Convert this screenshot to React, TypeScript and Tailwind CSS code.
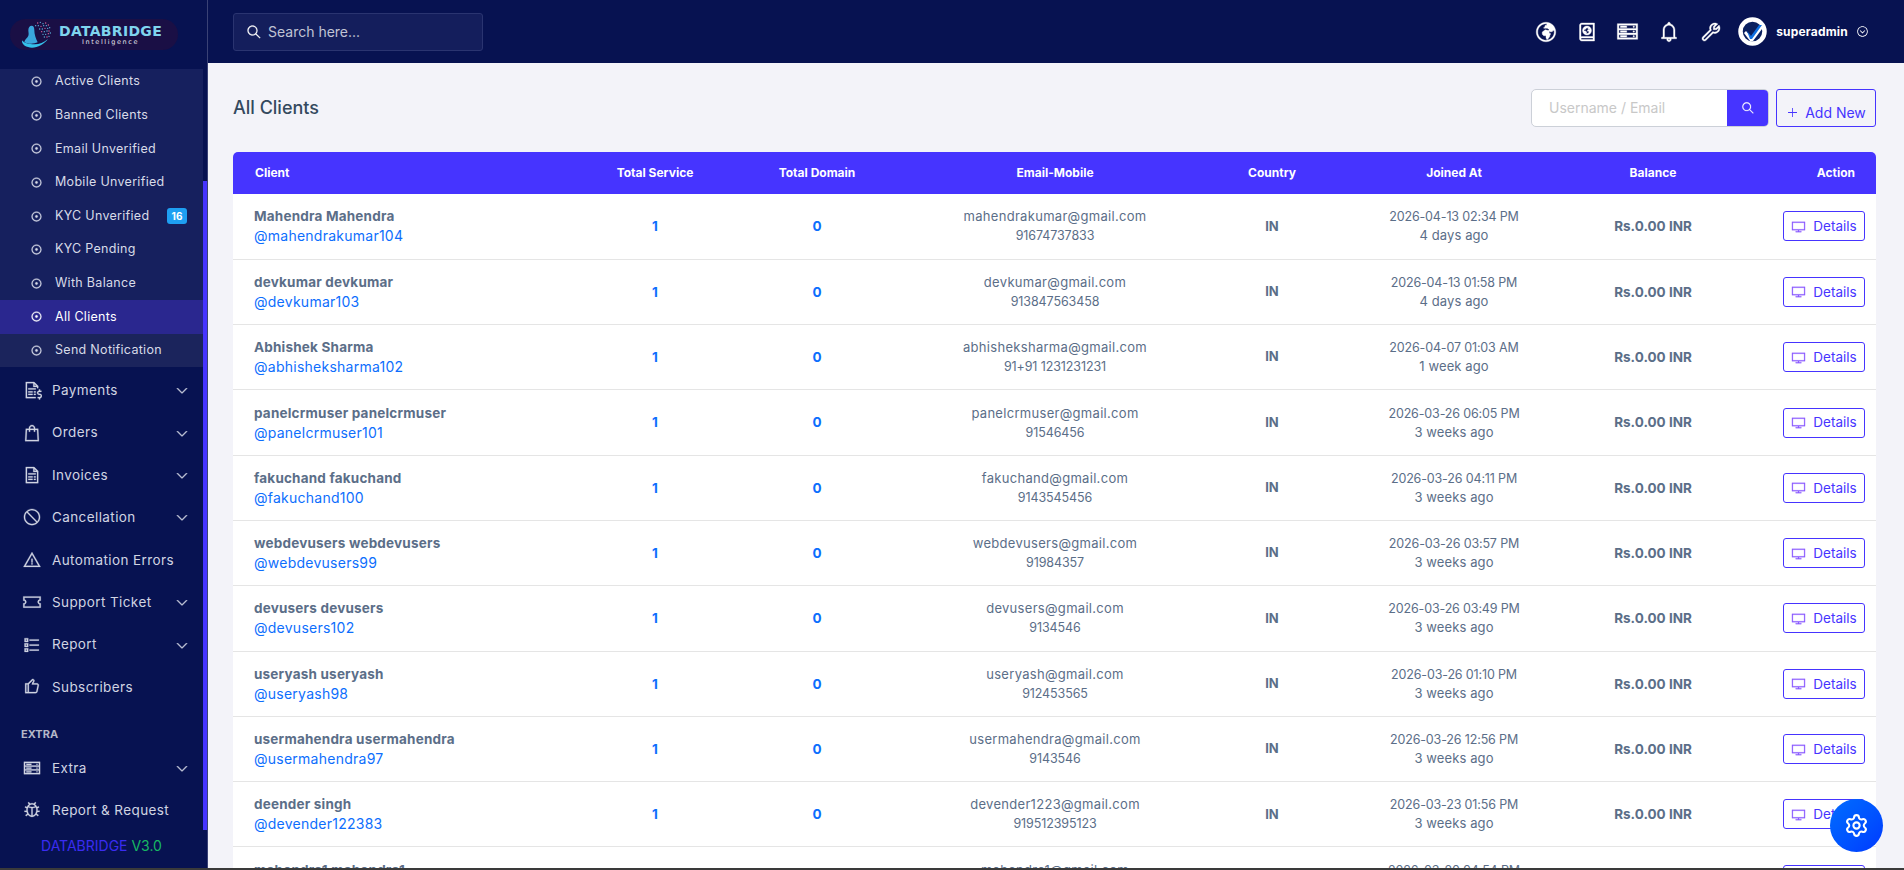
import React from 'react'
import { Settings } from 'lucide-react'
import {
  LiaAngleDownSolid,
  LiaAtlasSolid,
  LiaBanSolid,
  LiaBellSolid,
  LiaBugSolid,
  LiaChevronCircleDownSolid,
  LiaDesktopSolid,
  LiaDotCircle,
  LiaExclamationTriangleSolid,
  LiaFileInvoiceDollarSolid,
  LiaFileInvoiceSolid,
  LiaGlobeAfricaSolid,
  LiaListSolid,
  LiaPlusSolid,
  LiaSearchSolid,
  LiaServerSolid,
  LiaShoppingBagSolid,
  LiaThumbsUp,
  LiaTicketAltSolid,
  LiaWrenchSolid,
} from 'react-icons/lia'

const subItems = [
  'Active Clients',
  'Banned Clients',
  'Email Unverified',
  'Mobile Unverified',
  'KYC Unverified',
  'KYC Pending',
  'With Balance',
  'All Clients',
  'Send Notification',
]

const navItems = [
  { label: 'Payments', icon: LiaFileInvoiceDollarSolid, caret: true },
  { label: 'Orders', icon: LiaShoppingBagSolid, caret: true },
  { label: 'Invoices', icon: LiaFileInvoiceSolid, caret: true },
  { label: 'Cancellation', icon: LiaBanSolid, caret: true },
  { label: 'Automation Errors', icon: LiaExclamationTriangleSolid, caret: false },
  { label: 'Support Ticket', icon: LiaTicketAltSolid, caret: true },
  { label: 'Report', icon: LiaListSolid, caret: true },
  { label: 'Subscribers', icon: LiaThumbsUp, caret: false },
]

const clients = [
  ['Mahendra Mahendra', 'mahendrakumar104', 'mahendrakumar@gmail.com', '91674737833', '2026-04-13 02:34 PM', '4 days ago'],
  ['devkumar devkumar', 'devkumar103', 'devkumar@gmail.com', '913847563458', '2026-04-13 01:58 PM', '4 days ago'],
  ['Abhishek Sharma', 'abhisheksharma102', 'abhisheksharma@gmail.com', '91+91 1231231231', '2026-04-07 01:03 AM', '1 week ago'],
  ['panelcrmuser panelcrmuser', 'panelcrmuser101', 'panelcrmuser@gmail.com', '91546456', '2026-03-26 06:05 PM', '3 weeks ago'],
  ['fakuchand fakuchand', 'fakuchand100', 'fakuchand@gmail.com', '9143545456', '2026-03-26 04:11 PM', '3 weeks ago'],
  ['webdevusers webdevusers', 'webdevusers99', 'webdevusers@gmail.com', '91984357', '2026-03-26 03:57 PM', '3 weeks ago'],
  ['devusers devusers', 'devusers102', 'devusers@gmail.com', '9134546', '2026-03-26 03:49 PM', '3 weeks ago'],
  ['useryash useryash', 'useryash98', 'useryash@gmail.com', '912453565', '2026-03-26 01:10 PM', '3 weeks ago'],
  ['usermahendra usermahendra', 'usermahendra97', 'usermahendra@gmail.com', '9143546', '2026-03-26 12:56 PM', '3 weeks ago'],
  ['deender singh', 'devender122383', 'devender1223@gmail.com', '919512395123', '2026-03-23 01:56 PM', '3 weeks ago'],
  ['mahendra1 mahendra1', 'mahendra196', 'mahendra1@gmail.com', '919876543', '2026-03-20 04:54 PM', '3 weeks ago'],
]

const logoDots = [
  [25, 4], [29, 3], [33, 5], [37, 4], [22, 8], [26, 8], [30, 9], [34, 8], [38, 8], [41, 7],
  [28, 13], [32, 13], [36, 12], [40, 12], [43, 11], [31, 17], [35, 17], [39, 16], [42, 16],
  [33, 21], [37, 21], [41, 20], [44, 19], [35, 25], [39, 25], [42, 24],
]

function Logo() {
  return (
    <div className="flex h-[31px] w-[168px] items-center rounded-full bg-[#1a0f45] pl-[11px]">
      <svg width="36" height="30" viewBox="0 0 54 44" className="shrink-0">
        {logoDots.map(([x, y], i) => (
          <circle key={i} cx={x} cy={y} r="1" fill={i % 3 === 0 ? '#e0679c' : '#5fb7e0'} />
        ))}
        <path d="M16 8c-3 0-5 3-5 7 0 3 1 5 0 8-1 3-5 5-6 9 4 4 14 4 20 1-3-6-5-12-5-18 0-4-1-7-4-7z" fill="#3aa6dc" />
        <path d="M1.5 30c-1 7 7 11 15 11 9 0 18-5 24-13-6 5-13 8-20 8-9 0-16-2-19-6z" fill="#35c0ea" />
      </svg>
      <div className="ml-[2px] flex flex-col items-center">
        <span className="font-['DejaVu_Sans'] text-[14px] leading-[14px] font-bold tracking-[0.3px] text-[#7fd4ee]">DATABRIDGE</span>
        <span className="font-['DejaVu_Sans'] text-[6.5px] leading-[8px] tracking-[1.6px] text-[#e8e8f0]">Intelligence</span>
      </div>
    </div>
  )
}

function Sidebar() {
  return (
    <aside className="relative flex h-full w-[208px] shrink-0 flex-col border-r border-[#3a4275] bg-[#071251]">
      <div className="flex h-[69px] shrink-0 items-start pt-[19px] pl-[10px]">
        <Logo />
      </div>
      <div className="h-[298px] w-[203px] shrink-0 overflow-hidden bg-[#16205e]">
        <ul className="-mt-[4px]">
          {subItems.map((item) => (
            <li
              key={item}
              className={`flex h-[33.6px] items-center pr-[16px] pl-[30px] text-[12.5px] ${
                item === 'All Clients'
                  ? 'bg-[#2a278f] text-white'
                  : item === 'Send Notification'
                    ? 'bg-[#1b245c] text-[#d8dbe8]'
                    : 'text-[#d8dbe8]'
              }`}
            >
              <LiaDotCircle size={13} strokeWidth={0.8} className="mr-[12px] shrink-0" />
              <span className="flex-1 tracking-[0.3px]">{item}</span>
              {item === 'KYC Unverified' && (
                <span className="flex h-[16px] w-[20px] items-center justify-center rounded-[3px] bg-[#1e9ff2] text-[10px] font-bold text-white">16</span>
              )}
            </li>
          ))}
        </ul>
      </div>
      <ul className="w-[203px] pt-[2px]">
        {navItems.map((item) => (
          <NavRow key={item.label} {...item} />
        ))}
      </ul>
      <div className="flex h-[38.5px] w-[203px] items-end pb-[4px] pl-[21px] text-[11px] font-bold text-[#b4b8c8]">EXTRA</div>
      <ul className="w-[203px]">
        <NavRow label="Extra" icon={LiaServerSolid} caret />
        <NavRow label="Report & Request" icon={LiaBugSolid} caret={false} />
      </ul>
      <div className="mt-[5px] w-[203px] pl-[41px] text-[14px] leading-[20px]">
        <span className="text-[#3a2cf0]">DATABRIDGE</span> <span className="text-[#17b863]">V3.0</span>
      </div>
      {/* scrollbar thumb */}
      <div className="absolute top-[181px] right-[0px] h-[649px] w-[4px] bg-[#4634ff]" />
    </aside>
  )
}

function NavRow({ label, icon: Icon, caret }: { label: string; icon: React.ComponentType<{ size?: number; className?: string; strokeWidth?: number }>; caret: boolean }) {
  return (
    <li className="flex h-[42.4px] items-center pr-[14px] pl-[22px] text-[13.5px] text-[#d0d4e2]">
      <Icon size={20} strokeWidth={0.4} className="mr-[10px] shrink-0" />
      <span className="flex-1 tracking-[0.4px]">{label}</span>
      {caret && <LiaAngleDownSolid size={12} strokeWidth={1.5} className="mr-[1px] shrink-0" />}
    </li>
  )
}

function Header() {
  return (
    <header className="flex h-[63px] shrink-0 items-center justify-between bg-[#071251] pr-[35px] pl-[25px]">
      <div className="flex h-[38px] w-[250px] items-center rounded-[3px] border border-[#2a3470] bg-[#141e5c] pl-[12px] text-[14px] text-[#c0c4d4]">
        <LiaSearchSolid size={16} strokeWidth={0.5} className="mr-[6px] -scale-x-100 text-white" />
        Search here...
      </div>
      <div className="flex items-center text-white">
        <LiaGlobeAfricaSolid size={24} strokeWidth={0.5} className="mr-[17px]" />
        <LiaAtlasSolid size={24} strokeWidth={0.5} className="mr-[16px]" />
        <LiaServerSolid size={25} strokeWidth={0.5} className="mr-[17px]" />
        <LiaBellSolid size={24} strokeWidth={0.5} className="mr-[18px]" />
        <LiaWrenchSolid size={24} strokeWidth={0.5} className="mr-[15px]" />
        <svg width="29" height="29" viewBox="0 0 29 29" className="mr-[9px]">
          <circle cx="14.5" cy="14.5" r="12" fill="#0a2060" stroke="#ffffff" strokeWidth="4.5" />
          <path d="M8 14l5 6L23 7l4 1-12 16h-3L6 16z" fill="#ffffff" />
          <path d="M9 14l4 5 8-11 3 0-10 14h-2z" fill="#0e6fe0" />
        </svg>
        <span className="mr-[8px] text-[12px] font-bold tracking-[0.2px]">superadmin</span>
        <LiaChevronCircleDownSolid size={13} />
      </div>
    </header>
  )
}

function ClientsTable() {
  return (
    <div className="rounded-t-[5px] bg-white">
      <table className="w-full table-fixed border-collapse">
        <thead>
          <tr className="h-[42px] bg-[#4634ff] text-[12px] font-bold text-white">
            <th className="w-[341px] rounded-tl-[5px] pl-[22px] text-left font-bold">Client</th>
            <th className="w-[162px] font-bold">Total Service</th>
            <th className="w-[162px] font-bold">Total Domain</th>
            <th className="w-[314px] font-bold">Email-Mobile</th>
            <th className="w-[120px] font-bold">Country</th>
            <th className="w-[244px] font-bold">Joined At</th>
            <th className="w-[154px] font-bold">Balance</th>
            <th className="rounded-tr-[5px] pr-[21px] text-right font-bold">Action</th>
          </tr>
        </thead>
        <tbody>
          {clients.map(([name, handle, email, mobile, date, ago]) => (
            <tr key={handle} className="h-[65.3px] border-b border-[#e5e5e5] text-[13px] text-[#5b6e88]">
              <td className="pl-[21px]">
                <div className="text-[13.5px] leading-[20px] font-bold tracking-[0.2px]">{name}</div>
                <div className="text-[14px] leading-[20px] tracking-[0.25px] text-[#0d6efd]">@{handle}</div>
              </td>
              <td className="text-center text-[13.5px] font-bold text-[#0d6efd]">1</td>
              <td className="text-center text-[13.5px] font-bold text-[#0d6efd]">0</td>
              <td className="text-center leading-[19px] tracking-[0.3px]">
                <div>{email}</div>
                <div className="text-[12.5px] tracking-[-0.1px]">{mobile}</div>
              </td>
              <td className="text-center font-bold">IN</td>
              <td className="text-center leading-[19px]">
                <div className="text-[12.5px] tracking-[-0.15px]">{date}</div>
                <div className="tracking-[0.1px]">{ago}</div>
              </td>
              <td className="text-center text-[13.5px] font-bold">Rs.0.00 INR</td>
              <td className="pr-[11px]">
                <div className="ml-auto flex h-[30px] w-[82px] items-center justify-center rounded-[3px] border border-[#4634ff] text-[13.5px] text-[#4634ff]">
                  <LiaDesktopSolid size={15} strokeWidth={0.5} className="mr-[7px] text-[#8a5cff]" />
                  Details
                </div>
              </td>
            </tr>
          ))}
        </tbody>
      </table>
    </div>
  )
}

export default function App() {
  return (
    <div className="flex h-[870px] flex-col overflow-hidden font-['Inter',sans-serif]">
      <div className="relative flex h-[868px] overflow-hidden">
        <Sidebar />
        <div className="flex min-w-0 flex-1 flex-col bg-[#f3f3f9]">
          <Header />
          <main className="min-h-0 flex-1 overflow-hidden pr-[28px] pl-[25px]">
            <div className="flex h-[89px] items-start justify-between pt-[26px]">
              <h1 className="text-[18px] leading-[37px] font-medium text-[#34495e]">All Clients</h1>
              <div className="flex gap-[7px]">
                <div className="flex h-[38px] w-[238px] overflow-hidden rounded-[5px] border border-[#ccd0d8] bg-white">
                  <div className="flex-1 pl-[17px] text-[14px] leading-[36px] text-[#c8c8c8]">Username / Email</div>
                  <div className="flex w-[41px] items-center justify-center bg-[#4634ff] text-white">
                    <LiaSearchSolid size={14} strokeWidth={0.5} className="-scale-x-100" />
                  </div>
                </div>
                <div className="flex h-[38px] w-[100px] items-center justify-center rounded-[3px] border border-[#4634ff] pt-[8px] text-[14px] text-[#4634ff]">
                  <LiaPlusSolid size={13} className="mr-[6px]" />
                  Add New
                </div>
              </div>
            </div>
            <ClientsTable />
          </main>
        </div>
        {/* floating settings button */}
        <div className="absolute top-[799px] left-[1830px] flex h-[53px] w-[53px] items-center justify-center rounded-full bg-gradient-to-br from-[#0a6cff] to-[#0038ff] text-white">
          <Settings size={25} strokeWidth={2} />
        </div>
      </div>
      <div className="h-[2px] shrink-0 bg-[#3a3a3a]" />
    </div>
  )
}
